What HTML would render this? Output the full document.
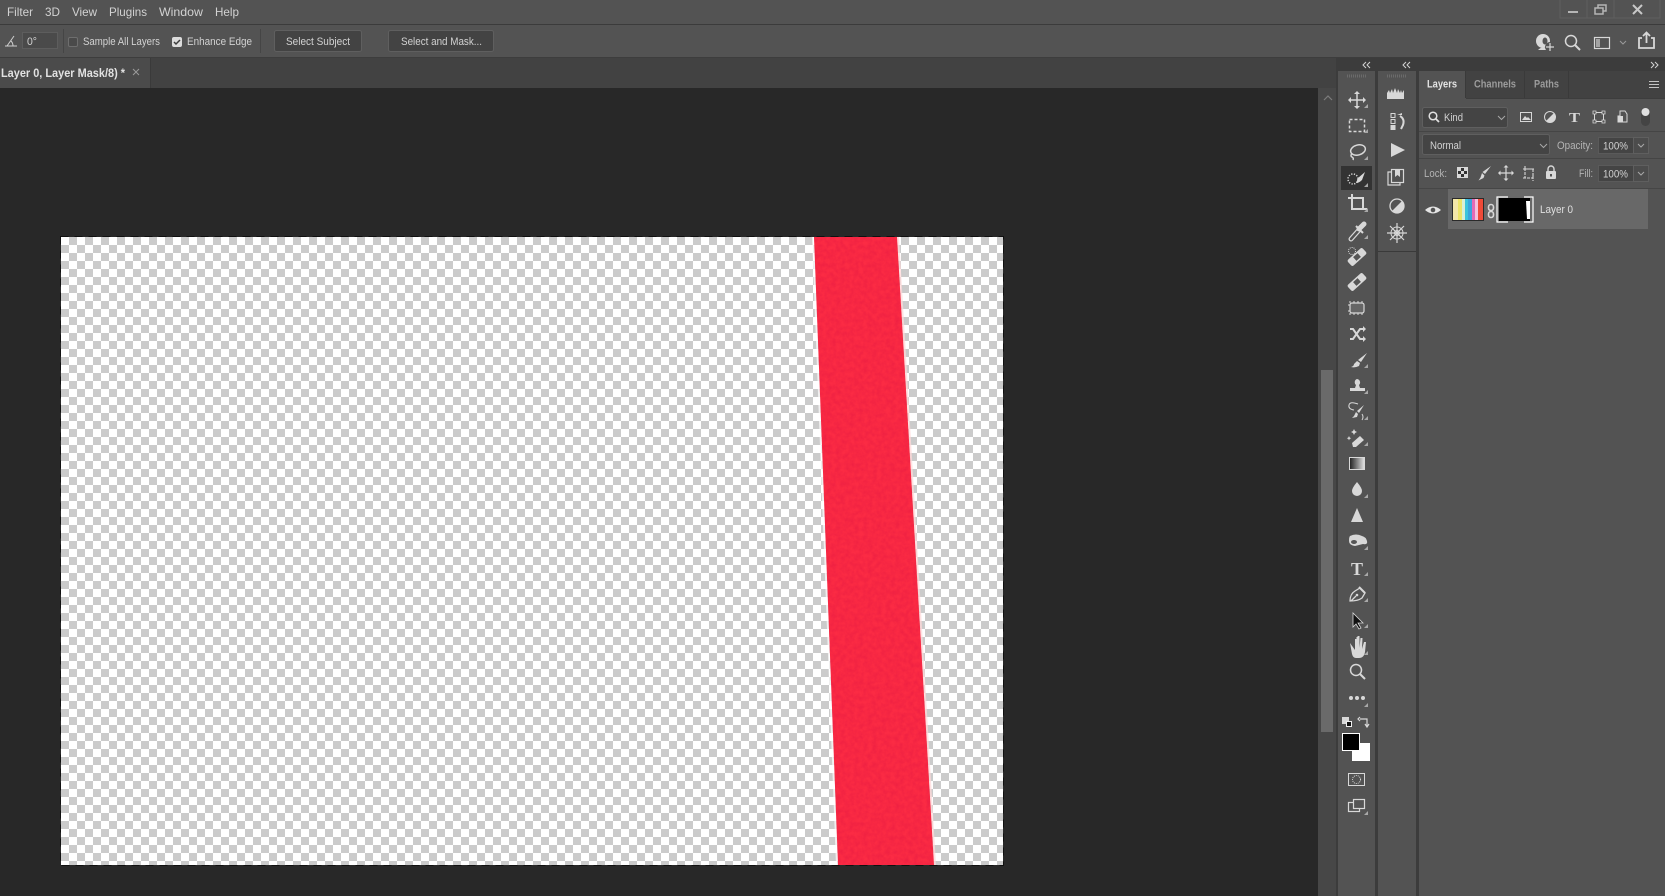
<!DOCTYPE html>
<html><head><meta charset="utf-8"><title>Layer 0</title>
<style>
html,body{margin:0;padding:0;background:#282828;overflow:hidden}
svg{display:block;position:absolute;left:0;top:0}
text{font-family:"Liberation Sans",sans-serif;fill:#d2d2d2;font-size:12px}
.s{font-size:11px}
.b{font-weight:bold}
.i{fill:none;stroke:#d8d8d8;stroke-width:1.5}
.f{fill:#d8d8d8;stroke:none}
</style></head><body>
<svg width="1665" height="896" viewBox="0 0 1665 896" xmlns="http://www.w3.org/2000/svg">
<defs>
<pattern id="ck" x="61" y="237" width="16" height="16" patternUnits="userSpaceOnUse">
<rect width="16" height="16" fill="#fff"/><rect x="8" width="8" height="8" fill="#cbcbcb"/><rect y="8" width="8" height="8" fill="#cbcbcb"/>
</pattern>
<filter id="nz" x="0" y="0" width="100%" height="100%"><feTurbulence type="fractalNoise" baseFrequency="0.22" numOctaves="3" seed="4"/><feColorMatrix values="0 0 0 0 0.6  0 0 0 0 0  0 0 0 0 0.05  0 0 0 .7 -.2"/></filter>
<clipPath id="band"><path d="M814 237H897L934 865H838Z"/></clipPath>
<linearGradient id="gr" x1="0" x2="1"><stop offset="0" stop-color="#1d1d1d"/><stop offset="1" stop-color="#e4e4e4"/></linearGradient>
</defs>

<!-- base -->
<rect width="1665" height="896" fill="#282828"/>
<rect width="1665" height="24" fill="#535353"/>
<rect y="24" width="1665" height="1" fill="#3b3b3b"/>
<rect y="25" width="1665" height="33" fill="#535353"/>
<rect y="57" width="1665" height="1" fill="#3d3d3d"/>
<rect y="58" width="1336" height="30" fill="#424242"/>
<rect y="58" width="150" height="30" fill="#4b4b4b"/>
<rect x="150" y="58" width="1" height="30" fill="#3a3a3a"/>

<!-- canvas -->
<rect x="61" y="237" width="942" height="628" fill="url(#ck)"/>
<path d="M812 237H814L838 865H836Z" fill="#fff" opacity=".7"/>
<path d="M897 237H899L936 865H934Z" fill="#ffd8d8" opacity=".75"/>
<path d="M814 237H897L934 865H838Z" fill="#fb2b44"/>
<g clip-path="url(#band)"><rect x="800" y="237" width="150" height="628" filter="url(#nz)" opacity=".55"/></g>
<rect x="60.5" y="236.5" width="943" height="629" fill="none" stroke="#0c0c0c" stroke-dasharray="8 6" opacity=".85"/>

<!-- scrollbar -->
<rect x="1318" y="88" width="18" height="808" fill="#474747"/>
<rect x="1321" y="370" width="12" height="362" fill="#6a6a6a"/>
<path d="M1324 100L1328 96L1332 100" fill="none" stroke="#7c7c7c" stroke-width="1.2"/>

<!-- dock columns -->
<rect x="1336" y="58" width="329" height="838" fill="#3c3c3c"/>
<rect x="1338" y="71" width="37" height="825" fill="#535353"/>
<rect x="1378" y="71" width="38" height="825" fill="#535353"/>
<rect x="1378" y="251" width="38" height="1" fill="#3a3a3a"/>
<rect x="1419" y="71" width="246" height="825" fill="#535353"/>
<path d="M1366 62l-3 3 3 3M1370 62l-3 3 3 3M1406 62l-3 3 3 3M1410 62l-3 3 3 3M1651 62l3 3-3 3M1655 62l3 3-3 3" fill="none" stroke="#d4d4d4" stroke-width="1"/>
<path d="M1347 76h20M1387 76h20" stroke="#6b6b6b" stroke-width="3" stroke-dasharray="1 1"/>

<!-- menu -->
<text x="7" y="16" textLength="26" lengthAdjust="spacingAndGlyphs">Filter</text>
<text x="45" y="16" textLength="15" lengthAdjust="spacingAndGlyphs">3D</text>
<text x="72" y="16" textLength="25" lengthAdjust="spacingAndGlyphs">View</text>
<text x="109" y="16" textLength="38" lengthAdjust="spacingAndGlyphs">Plugins</text>
<text x="159" y="16" textLength="44" lengthAdjust="spacingAndGlyphs">Window</text>
<text x="215" y="16" textLength="24" lengthAdjust="spacingAndGlyphs">Help</text>

<!-- window controls -->
<path d="M1560 0V18H1660V0M1587 0V18M1614 0V18" fill="none" stroke="#5f5f5f"/>
<rect x="1568" y="11" width="10" height="2" fill="#b5b5b5"/>
<path d="M1595 8h8v6h-8zM1598 8V5h8v6h-3" fill="none" stroke="#b5b5b5" stroke-width="1.5"/>
<path d="M1633 5l9 9M1642 5l-9 9" stroke="#c8c8c8" stroke-width="2"/>

<!-- options -->
<path d="M5 46h12M7 46L14 36M11 41q2 2 2 5" fill="none" stroke="#cfcfcf"/>
<rect x="22.500" y="32.500" width="35" height="16" fill="#4a4a4a" stroke="#5d5d5d"/>
<text class="s" x="27" y="45" textLength="10" lengthAdjust="spacingAndGlyphs">0°</text>
<rect x="63" y="29" width="1" height="24" fill="#454545"/>
<rect x="68.500" y="37.500" width="9" height="9" rx="1.500" fill="#4a4a4a" stroke="#6e6e6e"/>
<text class="s" x="83" y="45" textLength="77" lengthAdjust="spacingAndGlyphs">Sample All Layers</text>
<rect x="172" y="37" width="10" height="10" rx="2" fill="#dcdcdc"/>
<path d="M174 42l2 2 4-4" fill="none" stroke="#3c3c3c" stroke-width="1.500"/>
<text class="s" x="187" y="45" textLength="65" lengthAdjust="spacingAndGlyphs">Enhance Edge</text>
<rect x="260" y="29" width="1" height="24" fill="#454545"/>
<rect x="274.500" y="30.500" width="87" height="21" rx="2" fill="#434343" stroke="#5f5f5f"/>
<text class="s" x="286" y="45" textLength="64" lengthAdjust="spacingAndGlyphs">Select Subject</text>
<rect x="388.500" y="30.500" width="105" height="21" rx="2" fill="#434343" stroke="#5f5f5f"/>
<text class="s" x="401" y="45" textLength="81" lengthAdjust="spacingAndGlyphs">Select and Mask...</text>

<!-- tab -->
<text class="b" x="1" y="77" textLength="124" lengthAdjust="spacingAndGlyphs" style="fill:#e2e2e2">Layer 0, Layer Mask/8) *</text>
<path d="M133 69l6 6M139 69l-6 6" stroke="#9a9a9a"/>

<!-- right options icons -->
<circle cx="1543" cy="41" r="7" class="f"/><ellipse cx="1545" cy="41" rx="2.500" ry="3.500" fill="#535353"/><path d="M1538 50q5-5 10 0z" class="f"/><circle cx="1550" cy="47" r="5" fill="#535353"/><path d="M1550 43v8M1546 47h8" stroke="#d8d8d8" stroke-width="1.200"/>
<circle cx="1571" cy="41" r="5.500" class="i"/><path d="M1575 45l5 5" class="i" style="stroke-width:2"/>
<rect x="1594.500" y="37.500" width="15" height="11" class="i" style="stroke-width:1.200"/><rect x="1596" y="39" width="4" height="8" fill="#d8d8d8" opacity=".6"/>
<path d="M1620 41l3 3 3-3" fill="none" stroke="#9a9a9a"/>
<path d="M1642 38h-3v10h15V38h-3M1646.500 43V33M1643 36l3.500-3.500 3.500 3.500" class="i" style="stroke-width:1.800"/>

<!-- toolbar icons -->
<path d="M1350 100h14M1357 93v14" class="i"/><path d="M1357 91l-3 3h6zM1357 109l-3-3h6zM1348 100l3-3v6zM1366 100l-3-3v6z" class="f"/>
<rect x="1349.500" y="119.500" width="15" height="12" class="i" stroke-dasharray="3 2"/>
<ellipse cx="1358" cy="150" rx="7.500" ry="5" transform="rotate(-15 1358 150)" class="i"/><path d="M1352 153q-2 3 0 4 2 1 1 3" class="i"/>
<rect x="1341" y="166" width="31" height="24" fill="#333"/>
<circle cx="1353" cy="179" r="5" class="i" stroke-dasharray="1.200 1.500"/><path d="M1356 183l2-5 7-6-3 8q-3 3-6 3z" class="f"/>
<path d="M1348 198h15v11M1352 194v15h15" class="i" style="stroke-width:2"/>
<path d="M1351 239l8-9" stroke="#d8d8d8" stroke-width="5" stroke-linecap="round"/><path d="M1351 239l8-9" stroke="#535353" stroke-width="2.500" stroke-linecap="round"/><path d="M1359 229l5-5" stroke="#d8d8d8" stroke-width="5" stroke-linecap="round"/><path d="M1356 226l7 7" stroke="#d8d8d8" stroke-width="2"/>
<g transform="rotate(-42 1357 257)"><rect x="1347" y="253" width="20" height="8" rx="2" class="f"/><rect x="1354" y="254.500" width="6" height="5" fill="#555"/></g><circle cx="1352" cy="251" r="3.500" fill="none" stroke="#d8d8d8" stroke-dasharray="1 1"/>
<g transform="rotate(-42 1357 282)"><rect x="1347" y="278" width="20" height="8" rx="2" class="f"/><rect x="1354" y="279.500" width="6" height="5" fill="#555"/></g>
<rect x="1350" y="303" width="14" height="10" rx="2" fill="#666" stroke="#d8d8d8" stroke-width="1.200"/><path d="M1350 301v14M1354 301v14M1358 301v14M1362 301v14" stroke="#d8d8d8" stroke-dasharray="2 10" fill="none"/><path d="M1348 305h18M1348 311h18" stroke="#d8d8d8" fill="none" stroke-dasharray="2 16"/>
<path d="M1350 329h3l7 10h3M1350 339h3l7-10h3" class="i" style="stroke-width:2"/><path d="M1363 326l3 3-3 3zM1363 336l3 3-3 3z" class="f"/>
<path d="M1367 353l-6 9-3-2zM1357 361l3 2-1 3q-4 2-8 1 3-1 3-3z" class="f"/>
<path d="M1357 379a3.500 3.500 0 0 1 2 6l1 3h5v3h-15v-3h5l1-3a3.500 3.500 0 0 1 1-6zM1351 394h13" class="f" stroke="#d8d8d8" stroke-width=".6"/>
<path d="M1364 405l-5 8-2-2zM1356 412l2 2-1 3-5 1 2-2z" class="f"/><path d="M1358 404q-8-3-9 1t5 5M1362 414q2 3 0 6" class="i" style="stroke-width:1"/>
<path d="M1352 443l8-7 4 4-8 7h-3zM1354 429l1 2 2 1-2 1-1 2-1-2-2-1 2-1zM1349 436l.7 1.500 1.500.7-1.500.7-.7 1.500-.7-1.500-1.500-.7 1.500-.7z" class="f"/>
<rect x="1349.500" y="457.500" width="15" height="12" fill="url(#gr)" stroke="#d8d8d8"/>
<path d="M1357 482q5 6 5 9a5 5 0 0 1-10 0q0-3 5-9z" class="f"/>
<path d="M1357 508l6 14h-12z" class="f"/>
<path d="M1350 536q6-3 12 0 4 1 5 5 1 4-4 3l-8 2q-6-1-6-5 0-4 1-5z" class="f"/><ellipse cx="1354" cy="542" rx="3" ry="2" fill="#555"/>
<text x="1351" y="575" class="b" style="font-family:'Liberation Serif',serif;font-size:18px;fill:#d8d8d8" textLength="12" lengthAdjust="spacingAndGlyphs">T</text>
<path d="M1350 601q0-7 5-10l5-3 5 5-3 5q-4 3-12 3zM1351 601l5-5" class="i" style="stroke-width:1.300"/><path d="M1359 587l6 6" stroke="#d8d8d8" stroke-width="2"/><circle cx="1357" cy="595" r="1.300" class="f"/>
<path d="M1353 613v14l3-3 3 5 2-1-3-5h5z" fill="#111" stroke="#d8d8d8" stroke-width=".8"/>
<path transform="translate(0,-3)" d="M1350 646l5 7v-11h1.500v-2h1v11-12h2v12l1-10h2l-.5 11 2-7h2l-1 10q-1 6-6 6h-3q-3 0-4-4z" class="f"/>
<circle cx="1356" cy="670" r="5.500" class="i"/><path d="M1360 674l5 5" class="i" style="stroke-width:2"/>
<circle cx="1351" cy="698" r="2" class="f"/><circle cx="1357" cy="698" r="2" class="f"/><circle cx="1363" cy="698" r="2" class="f"/>
<path d="M1368 108h-4l4-4zM1368 133h-4l4-4zM1368 160h-4l4-4zM1368 187h-4l4-4zM1368 212h-4l4-4zM1368 239h-4l4-4zM1368 368h-4l4-4zM1368 394h-4l4-4zM1368 420h-4l4-4zM1368 446h-4l4-4zM1368 498h-4l4-4zM1368 550h-4l4-4zM1368 576h-4l4-4zM1368 602h-4l4-4zM1368 628h-4l4-4zM1368 655h-4l4-4zM1368 707h-4l4-4zM1368 815h-4l4-4z" fill="#a8a8a8"/>

<!-- swatches -->
<rect x="1342" y="717" width="7" height="7" fill="#d8d8d8"/><rect x="1346.500" y="721.500" width="5" height="5" fill="#111" stroke="#eee"/>
<path d="M1360 719h7v7M1365 724l2 3 2-3M1360 717l-2 2 2 2" fill="none" stroke="#d8d8d8" stroke-width="1.200"/>
<rect x="1352" y="743" width="18" height="18" fill="#fff"/>
<rect x="1342.500" y="733.500" width="17" height="17" fill="#000" stroke="#fff"/>
<rect x="1348.500" y="773.500" width="16" height="12" class="i" style="stroke-width:1"/><circle cx="1356.500" cy="779.500" r="4" class="i" style="stroke-width:1" stroke-dasharray="1 1"/>
<rect x="1348.500" y="802.500" width="11" height="9" class="i" style="stroke-width:1.200"/><rect x="1353.500" y="799.500" width="11" height="9" fill="#555" stroke="#d8d8d8" stroke-width="1.200"/>

<!-- second column -->
<path d="M1387 99V93l2-3 1 3 2-4 1 4 2-5 2 5 1-4 2 4 1-3 1 3 2-3v9z" class="f"/>
<rect x="1391" y="113.500" width="4" height="4" fill="none" stroke="#d8d8d8"/><rect x="1391" y="119.500" width="4" height="4" fill="none" stroke="#d8d8d8"/><rect x="1390.500" y="125" width="5" height="5" class="f"/>
<path d="M1400 116q5 3 3 9l-2 4" class="i" style="stroke-width:2"/><path d="M1397 115h5v-2z" class="f"/>
<path d="M1391 143l14 7-14 7z" class="f"/>
<rect x="1391.500" y="169.500" width="12" height="13" fill="none" stroke="#d8d8d8" stroke-width="1.200"/><path d="M1391 172h-3v13h12v-2.500" fill="none" stroke="#d8d8d8" stroke-width="1.200"/><path d="M1395 170h5v7l-2.500-2-2.500 2z" class="f"/>
<circle cx="1397" cy="206" r="7" fill="none" stroke="#d8d8d8" stroke-width="1.300"/><path d="M1402 201a7 7 0 0 1-10 10z" class="f"/>
<circle cx="1397" cy="233" r="6" fill="none" stroke="#d8d8d8"/><circle cx="1397" cy="233" r="2.500" fill="none" stroke="#d8d8d8"/><path d="M1387 233h20M1397 223v20M1390 226l14 14M1404 226l-14 14" stroke="#d8d8d8" stroke-width="1.200"/>

<!-- layers panel -->
<rect x="1419" y="71" width="246" height="27" fill="#424242"/>
<rect x="1419" y="71" width="46" height="27" fill="#535353"/>
<rect x="1465" y="71" width="1" height="27" fill="#3a3a3a"/>
<rect x="1524" y="71" width="1" height="27" fill="#3a3a3a"/>
<rect x="1568" y="71" width="1" height="27" fill="#3a3a3a"/>
<rect x="1466" y="98" width="199" height="1" fill="#3d3d3d"/>
<text class="s b" x="1427" y="87.500" textLength="30" lengthAdjust="spacingAndGlyphs" style="fill:#e4e4e4">Layers</text>
<text class="s b" x="1474" y="87.500" textLength="42" lengthAdjust="spacingAndGlyphs" style="fill:#9c9c9c">Channels</text>
<text class="s b" x="1534" y="87.500" textLength="25" lengthAdjust="spacingAndGlyphs" style="fill:#9c9c9c">Paths</text>
<path d="M1649 81.500h10M1649 84.500h10M1649 87.500h10" stroke="#c4c4c4" stroke-width="1"/>

<rect x="1422.500" y="107.500" width="85" height="20" rx="2" fill="#444" stroke="#5f5f5f"/>
<circle cx="1433" cy="116" r="3.800" fill="none" stroke="#e0e0e0" stroke-width="1.500"/><path d="M1436 119l3 3" stroke="#e0e0e0" stroke-width="1.800"/>
<text class="s" x="1444" y="121" textLength="19" lengthAdjust="spacingAndGlyphs">Kind</text>
<path d="M1498 116l3.500 3.500 3.500-3.500" fill="none" stroke="#a8a8a8"/>
<rect x="1520.500" y="112.500" width="11" height="9" fill="none" stroke="#d8d8d8"/><path d="M1522 120l3-4 2 2 1-1 3 3z" class="f"/>
<circle cx="1550" cy="117" r="5.500" fill="none" stroke="#d8d8d8"/><path d="M1554 113a5.500 5.500 0 0 1-8 8z" class="f"/>
<text x="1569" y="122" class="b" style="font-family:'Liberation Serif',serif;font-size:14px;fill:#d8d8d8" textLength="11" lengthAdjust="spacingAndGlyphs">T</text>
<rect x="1594.500" y="112.500" width="9" height="9" fill="none" stroke="#d8d8d8"/><path d="M1593 111h3v3h-3zM1602 111h3v3h-3zM1593 120h3v3h-3zM1602 120h3v3h-3z" fill="#535353" stroke="#d8d8d8" stroke-width=".8"/>
<path d="M1620 111h5l2 3v8h-9v-6h2z" fill="none" stroke="#d8d8d8"/><rect x="1618" y="116" width="5" height="6" class="f"/>
<rect x="1641" y="110" width="9" height="16" rx="4.500" fill="#444"/><circle cx="1645.500" cy="112" r="4" fill="#e0e0e0"/>
<rect x="1419" y="131" width="246" height="1" fill="#454545"/>

<rect x="1422.500" y="134.500" width="127" height="20" rx="2" fill="#444" stroke="#5f5f5f"/>
<text class="s" x="1430" y="149" textLength="31" lengthAdjust="spacingAndGlyphs">Normal</text>
<path d="M1540 144l3.500 3.500 3.500-3.500" fill="none" stroke="#a8a8a8"/>
<text class="s" x="1557" y="149" textLength="36" lengthAdjust="spacingAndGlyphs" style="fill:#b4b4b4">Opacity:</text>
<rect x="1598.500" y="137.500" width="35" height="16" fill="#444" stroke="#5a5a5a"/>
<rect x="1633.500" y="137.500" width="15" height="16" fill="#4c4c4c" stroke="#5f5f5f"/>
<text class="s" x="1603" y="149.500" textLength="25" lengthAdjust="spacingAndGlyphs">100%</text>
<path d="M1638 144l3 3 3-3" fill="none" stroke="#a8a8a8"/>
<rect x="1419" y="158" width="246" height="1" fill="#454545"/>

<text class="s" x="1424" y="177" textLength="23" lengthAdjust="spacingAndGlyphs" style="fill:#b4b4b4">Lock:</text>
<rect x="1457.500" y="167.500" width="10" height="10" fill="#333" stroke="#d8d8d8"/><path d="M1458 168h3v3h-3zM1464 168h3v3h-3zM1461 171h3v3h-3zM1458 174h3v3h-3zM1464 174h3v3h-3z" class="f"/>
<path d="M1491 166l-6 8-2.500-2zM1482 173l2.500 2.500-1 2.500-5 2.500 2-3z" class="f"/>
<path d="M1500 173h12M1506 167v12" stroke="#d8d8d8" stroke-width="1.200"/><path d="M1506 165l-2.500 2.500h5zM1506 181l-2.500-2.500h5zM1498 173l2.500-2.500v5zM1514 173l-2.500-2.500v5z" class="f"/>
<path d="M1525 169h8v9h-8zM1523 169h12M1525 166v3M1533 176v5M1523 178h2" fill="none" stroke="#d8d8d8" stroke-width="1.100" stroke-dasharray="3 1"/>
<rect x="1546" y="171" width="10" height="8" rx="1" class="f"/><path d="M1548 171v-2a3 3 0 0 1 6 0v2" class="i" style="stroke-width:1.400"/><rect x="1550" y="174" width="2" height="2.500" fill="#535353"/>
<text class="s" x="1579" y="177" textLength="14" lengthAdjust="spacingAndGlyphs" style="fill:#b4b4b4">Fill:</text>
<rect x="1598.500" y="165.500" width="35" height="16" fill="#444" stroke="#5a5a5a"/>
<rect x="1633.500" y="165.500" width="15" height="16" fill="#4c4c4c" stroke="#5f5f5f"/>
<text class="s" x="1603" y="177.500" textLength="25" lengthAdjust="spacingAndGlyphs">100%</text>
<path d="M1638 172l3 3 3-3" fill="none" stroke="#a8a8a8"/>
<rect x="1419" y="188" width="246" height="1" fill="#464646"/>

<rect x="1448" y="189" width="200" height="40" fill="#686868"/>
<path d="M1425 210q8-7 16 0-8 7-16 0z" fill="#e4e4e4"/><circle cx="1433" cy="210" r="2.300" fill="#535353"/>
<!-- thumbnail -->
<rect x="1452" y="198" width="32" height="23" fill="#2a2a2a"/>
<rect x="1453" y="199" width="5" height="21" fill="#f3e7a8"/><rect x="1458" y="199" width="4" height="21" fill="#ece46a"/><rect x="1462" y="199" width="3" height="21" fill="#d8f0d8"/><rect x="1465" y="199" width="3" height="21" fill="#3cc4dc"/><rect x="1468" y="199" width="4" height="21" fill="#3aa4dc"/><rect x="1472" y="199" width="3" height="21" fill="#e46ab4"/><rect x="1475" y="199" width="3" height="21" fill="#f4c0dc"/><rect x="1478" y="199" width="5" height="21" fill="#ee4a38"/>
<rect x="1488.500" y="204.500" width="5" height="6" rx="2.500" fill="none" stroke="#d8d8d8" stroke-width="1.600"/><rect x="1488.500" y="211.500" width="5" height="6" rx="2.500" fill="none" stroke="#d8d8d8" stroke-width="1.600"/>
<!-- mask -->
<rect x="1499" y="198" width="31" height="23" fill="#000"/>
<path d="M1526 201h4v18h-3z" fill="#fff"/>
<path d="M1508 197h-11v25h11M1524 197h9v25h-9" fill="none" stroke="#fff" stroke-width="1.200"/>
<text class="s" x="1540" y="213" textLength="33" lengthAdjust="spacingAndGlyphs" style="fill:#e0e0e0">Layer 0</text>
</svg>
</body></html>
